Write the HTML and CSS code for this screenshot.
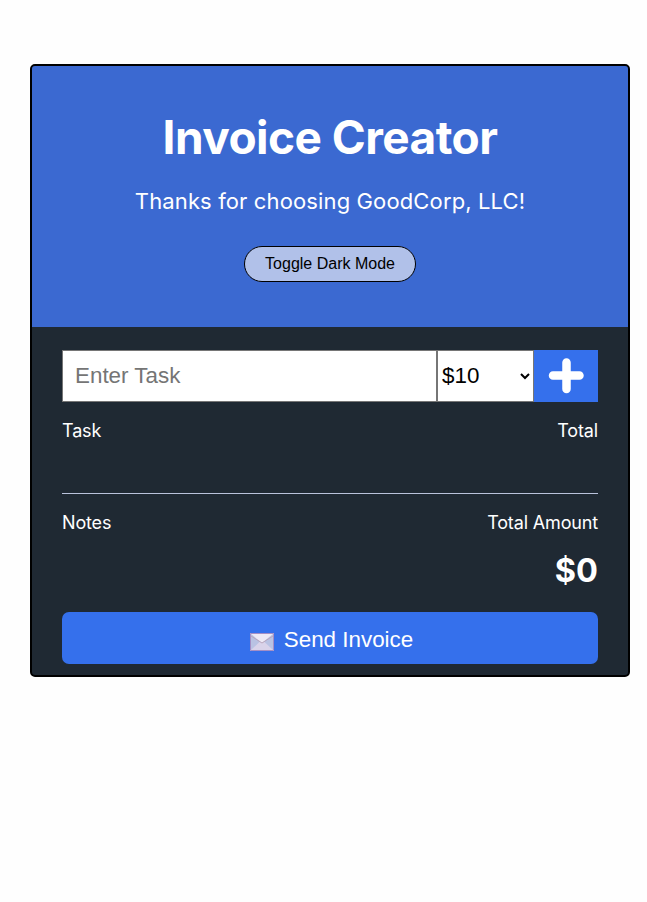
FILE: index.html
```html
<!DOCTYPE html>
<html lang="en">
<head>
<meta charset="utf-8">
<title>Invoice Creator</title>
<link rel="stylesheet" href="styles.css">
</head>
<body>
<main class="card">
  <header class="header">
    <h1>Invoice Creator</h1>
    <p class="tagline">Thanks for choosing GoodCorp, LLC!</p>
    <button class="toggle" type="button">Toggle Dark Mode</button>
  </header>
  <section class="content">
    <form class="entry">
      <input class="task-input" type="text" placeholder="Enter Task">
      <select class="price"><option>$10</option><option>$20</option><option>$30</option></select>
      <button class="add" type="button" aria-label="Add">
        <svg width="36" height="36" viewBox="0 0 36 36"><path d="M18.500 4.500v26.500M5 17.500h26.500" stroke="#fff" stroke-width="8.500" stroke-linecap="round"/></svg>
      </button>
    </form>
    <div class="row tasks"><span>Task</span><span>Total</span></div>
    <div class="row notes"><span>Notes</span><span>Total Amount</span></div>
    <div class="amount">$0</div>
    <button class="send" type="button">
      <svg class="mail" width="24" height="18" viewBox="0 0 24 18"><path d="M0 0h24v18H0z" fill="#b9c2e3"/><path d="M1 17L9.500 9h5L23 17z" fill="#d9d3ea"/><path d="M.5.5h23L12 10z" fill="#eeeaf6"/><path d="M1 3l11 7 11-7" fill="none" stroke="#b9a7bd"/><path d="M.5.5h23v17H.5z" fill="none" stroke="#a58fc5"/></svg>
      <span>Send Invoice</span>
    </button>
  </section>
</main>
</body>
</html>
```
FILE: styles.css
```css
* { box-sizing: border-box; }
body { margin: 0; padding: 64px 17px 0 30px; background: #fefefe; font-family: Inter, sans-serif; color: #fff; }
.card { width: 600px; height: 613px; border: 2px solid #000; border-radius: 5px; background: #1f2933; overflow: hidden; }
.header { height: 261px; padding-top: 43px; background: #3b69d1; text-align: center; }
h1 { margin: 0; font-size: 46px; line-height: 56px; font-weight: 700; letter-spacing: -.55px; }
.tagline { margin: 22px 0 0; font-size: 22px; line-height: 28px; letter-spacing: .13px; }
.toggle { display: block; width: 172px; height: 36px; margin: 31px auto 0; padding: 0; border: 1px solid #000; border-radius: 18px; background: #b1c1e9; color: #000; font: 16px "Liberation Sans", sans-serif; }
.content { padding: 23px 30px 0; }
.entry { display: flex; height: 52px; }
.task-input { width: 375px; padding: 0 12px; border: 1px solid #767676; border-radius: 0; font: 22.4px "Liberation Sans", sans-serif; }
.task-input::placeholder { color: #757575; }
.price { width: 97px; padding: 0 1px 2px 0; border: 1px solid #767676; border-radius: 0; background: #fff; color: #000; font: 22.4px "Liberation Sans", sans-serif; }
.add { width: 64px; padding: 0; border: 0; background: #3570ec; display: flex; align-items: center; justify-content: center; }
.row { display: flex; justify-content: space-between; font-size: 18px; line-height: 24px; letter-spacing: -.15px; }
.tasks { height: 92px; padding-top: 17px; border-bottom: 1px solid #bac3dc; }
.notes { padding-top: 17px; }
.amount { margin-top: 16px; text-align: right; font-size: 32.5px; line-height: 40px; font-weight: 700; }
.send { display: flex; align-items: center; justify-content: center; gap: 10px; width: 100%; height: 52px; margin-top: 21px; padding: 3px 0 0 3px; border: 0; border-radius: 7px; background: #3570ec; color: #fff; font: 22.4px "Liberation Sans", sans-serif; }
.mail { margin-top: 4px; }
```
